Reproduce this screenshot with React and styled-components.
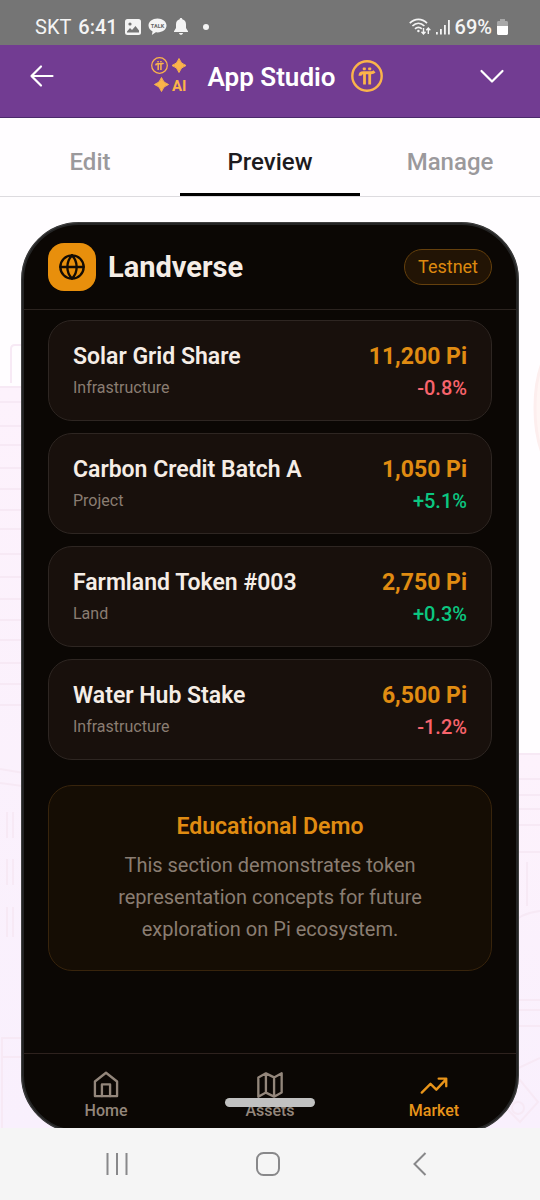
import React, { useState } from "react";
import styled, { createGlobalStyle } from "styled-components";

const GlobalStyle = createGlobalStyle`
  * {
    box-sizing: border-box;
  }

  body {
    margin: 0;
    background: #fffdff;
    font-family: Roboto, "Noto Sans", sans-serif;
  }

  button {
    margin: 0;
    padding: 0;
    border: 0;
    background: none;
    font-family: inherit;
    color: inherit;
    cursor: pointer;
  }

  h1, h2, h3, p, ul {
    margin: 0;
    padding: 0;
  }

  svg {
    display: block;
    flex: none;
  }
`;

const Page = styled.div`
  min-height: 100vh;
  display: flex;
  flex-direction: column;
`;

const StatusBar = styled.div`
  height: 45px;
  padding: 8px 32px 0 35px;
  display: flex;
  justify-content: space-between;
  background: #757575;
  color: #f4f4f4;
  font-size: 20px;
`;

const StatusGroup = styled.div`
  display: flex;
  align-items: center;
  gap: ${(props) => props.$gap};
`;

const StatusText = styled.span`
  font-weight: ${(props) => (props.$strong ? 500 : 400)};
`;

const Dot = styled.span`
  width: 6px;
  height: 6px;
  margin-left: 8px;
  border-radius: 50%;
  background: currentColor;
`;

const TopBar = styled.header`
  height: 73px;
  padding: 0 35px 11px 29px;
  display: flex;
  align-items: center;
  justify-content: space-between;
  background: #723c92;
  border-bottom: 1px solid #4b2a6b;
  color: white;
`;

const Brand = styled.div`
  display: flex;
  align-items: center;
  gap: 16px;
  color: #fbb44a;
`;

const BrandTitle = styled.h1`
  padding: 3px 0 0 4px;
  color: white;
  font-size: 26px;
  line-height: 32px;
  font-weight: 600;
`;

const Tabs = styled.nav`
  height: 79px;
  display: flex;
  border-bottom: 1px solid #dddbdf;
`;

const Tab = styled.button`
  flex: 1;
  padding-top: 12px;
  border-bottom: 3px solid ${(props) => (props.$active ? "#000" : "transparent")};
  color: ${(props) => (props.$active ? "#1d1b20" : "#9b999c")};
  font-size: 24px;
  font-weight: 500;
`;

const Stage = styled.main`
  position: relative;
  flex: 1;
  display: flex;
  padding: 25px 21px 0;
  overflow: hidden;
`;

const Backdrop = styled.svg`
  position: absolute;
  inset: 0;
  width: 100%;
  height: 100%;
`;

const Device = styled.section`
  position: relative;
  flex: 1;
  margin-bottom: -5px;
  display: flex;
  flex-direction: column;
  border: 3px solid #242424;
  border-radius: 58px;
  outline: 1px solid rgba(90, 90, 90, 0.5);
  outline-offset: -1px;
  background: #0b0704;
  overflow: hidden;
`;

const AppHeader = styled.div`
  padding: 18px 24px;
  display: flex;
  align-items: center;
  gap: 12px;
  border-bottom: 1px solid #2b231f;
`;

const AppLogo = styled.div`
  width: 48px;
  height: 48px;
  display: grid;
  place-items: center;
  border-radius: 16px;
  background: #e88f0c;
  color: #140c04;
`;

const AppName = styled.h2`
  flex: 1;
  color: #f5ede6;
  font-size: 29px;
  line-height: 36px;
  font-weight: 700;
`;

const Badge = styled.span`
  padding: 5px 13px;
  border: 1px solid #65400d;
  border-radius: 18px;
  background: #221405;
  color: #dd890f;
  font-size: 18px;
  line-height: 24px;
`;

const Content = styled.div`
  flex: 1;
  padding: 10px 24px 24px;
`;

const AssetList = styled.ul`
  display: flex;
  flex-direction: column;
  gap: 12px;
  list-style: none;
`;

const AssetCard = styled.li`
  padding: 20px 24px 17px;
  display: flex;
  justify-content: space-between;
  border: 1px solid #2e2622;
  border-radius: 24px;
  background: #18100c;
`;

const AssetColumn = styled.div`
  text-align: ${(props) => props.$align || "left"};
`;

const AssetName = styled.h3`
  color: #f5ede6;
  font-size: 23px;
  line-height: 32px;
  font-weight: 600;
`;

const AssetType = styled.p`
  color: #8a7d72;
  font-size: 16px;
  line-height: 30px;
`;

const AssetPrice = styled.p`
  color: #e08c12;
  font-size: 23px;
  line-height: 32px;
  font-weight: 700;
`;

const AssetChange = styled.p`
  color: ${(props) => (props.$down ? "#f8646c" : "#0bc781")};
  font-size: 20px;
  line-height: 30px;
  font-weight: 500;
`;

const Notice = styled.section`
  margin-top: 25px;
  padding: 25px 48px;
  border: 1px solid #38240c;
  border-radius: 24px;
  background: #150d04;
  text-align: center;
`;

const NoticeTitle = styled.h3`
  color: #e08c12;
  font-size: 23px;
  line-height: 32px;
  font-weight: 600;
`;

const NoticeText = styled.p`
  margin-top: 6px;
  color: #8a7d72;
  font-size: 20px;
  line-height: 32px;
`;

const AppNav = styled.nav`
  height: 77px;
  display: grid;
  grid-template-columns: repeat(3, 1fr);
  border-top: 1px solid #2e221e;
`;

const AppNavItem = styled.button`
  padding-top: 17px;
  display: flex;
  flex-direction: column;
  align-items: center;
  gap: 1px;
  color: ${(props) => (props.$active ? "#e8941a" : "#93867b")};
  font-size: 16px;
  line-height: 22px;
  font-weight: 500;
`;

const GestureHandle = styled.div`
  position: absolute;
  left: 50%;
  bottom: 21px;
  width: 90px;
  height: 9px;
  border-radius: 5px;
  background: #c1c1c1;
  transform: translateX(-50%);
`;

const SystemNav = styled.footer`
  height: 72px;
  padding: 0 44px 0 41px;
  display: grid;
  grid-template-columns: repeat(3, 1fr);
  background: #f5f5f5;
  color: #88888a;
`;

const SystemButton = styled.button`
  display: grid;
  place-items: center;
`;

const assets = [
  { name: "Solar Grid Share", type: "Infrastructure", price: "11,200 Pi", change: "-0.8%" },
  { name: "Carbon Credit Batch A", type: "Project", price: "1,050 Pi", change: "+5.1%" },
  { name: "Farmland Token #003", type: "Land", price: "2,750 Pi", change: "+0.3%" },
  { name: "Water Hub Stake", type: "Infrastructure", price: "6,500 Pi", change: "-1.2%" },
];

const Stroke = ({ size = 28, width = 2, children }) => (
  <svg
    width={size}
    height={size}
    viewBox="0 0 24 24"
    fill="none"
    stroke="currentColor"
    strokeWidth={width}
    strokeLinecap="round"
    strokeLinejoin="round"
    aria-hidden="true"
  >
    {children}
  </svg>
);

const PhotoIcon = () => (
  <svg width="16" height="16" viewBox="0 0 16 16" aria-hidden="true">
    <rect width="16" height="16" rx="2.5" fill="currentColor" />
    <circle cx="5" cy="5" r="1.6" fill="#757575" />
    <path d="M2 12.5l3-3.5 2 2 3.5-4 3.5 4.5V13.500H2z" fill="#757575" />
  </svg>
);

const TalkIcon = () => (
  <svg width="19" height="18" viewBox="0 0 19 18" aria-hidden="true">
    <path
      d="M9.500 0.500C4.500 0.500 0.500 3.500 0.500 7.500c0 2.600 1.600 4.700 4.100 5.900L3.800 17l4-2.700c.6.1 1.100.1 1.700.1 5 0 9-3 9-6.900s-4-7-9-7z"
      fill="currentColor"
    />
    <text x="9.500" y="9.500" textAnchor="middle" fontSize="5.500" fontWeight="700" fill="#666">
      TALK
    </text>
  </svg>
);

const BellIcon = () => (
  <svg width="14" height="17" viewBox="0 0 14 17" fill="currentColor" aria-hidden="true">
    <path d="M7 0c.8 0 1.300.5 1.300 1.300C10.700 1.900 12 3.800 12 6.300V10l2 3.200v.8H0v-.8L2 10V6.300c0-2.500 1.300-4.400 3.700-5C5.700.5 6.200 0 7 0z" />
    <path d="M5 15h4c-.2 1.100-1 1.800-2 1.800S5.200 16.100 5 15z" />
  </svg>
);

const WifiIcon = () => (
  <svg width="22" height="18" viewBox="0 0 22 18" fill="none" stroke="currentColor" strokeWidth="1.700" aria-hidden="true">
    <path d="M0.800 5.200C5.800 0.200 13 0.200 18 5.200" />
    <path d="M3.400 8C7 4.500 11.800 4.500 15.400 8" />
    <path d="M6 10.800c2-2 4.800-2 6.800 0" />
    <circle cx="9.400" cy="13" r="1.200" fill="currentColor" stroke="none" />
    <path d="M14.500 10v5.500M12.500 13.800l2 2.200 2-2.200M19.300 16v-5.500M17.300 12.200l2-2.200 2 2.200" strokeWidth="1.400" />
  </svg>
);

const SignalIcon = () => (
  <svg width="14" height="16" viewBox="0 0 14 16" fill="currentColor" aria-hidden="true">
    <rect x="0" y="13" width="1.800" height="2.500" />
    <rect x="4" y="10" width="1.800" height="5.500" />
    <rect x="8" y="6" width="1.800" height="9.500" />
    <rect x="12" y="1" width="1.800" height="14.500" />
  </svg>
);

const BatteryIcon = () => (
  <svg width="11" height="16" viewBox="0 0 11 16" aria-hidden="true">
    <path d="M3 0h5v2h1.500c.9 0 1.500.6 1.500 1.500V7H0V3.500C0 2.600.6 2 1.500 2H3z" fill="#a8a8a8" />
    <path d="M0 7h11v7.500c0 .9-.6 1.500-1.500 1.500h-8C.6 16 0 15.400 0 14.500z" fill="#fff" />
  </svg>
);

const PiMark = () => (
  <>
    <circle cx="16" cy="16" r="14.700" fill="none" stroke="currentColor" strokeWidth="2.400" />
    <rect x="11.800" y="7.600" width="3" height="2.600" rx="0.600" fill="currentColor" />
    <rect x="17.200" y="7.600" width="3" height="2.600" rx="0.600" fill="currentColor" />
    <path
      d="M9 15.700c.1-2 1.300-3 3.200-3h8c1.500 0 2.400-.4 3.300-1.300"
      fill="none"
      stroke="currentColor"
      strokeWidth="3"
    />
    <path d="M13.500 12.500v12M18.700 12.500v12" fill="none" stroke="currentColor" strokeWidth="2.800" />
  </>
);

const PiCoin = () => (
  <svg width="32" height="32" viewBox="0 0 32 32" aria-hidden="true">
    <PiMark />
  </svg>
);

const StudioLogo = () => (
  <svg width="37" height="38" viewBox="0 0 37 38" fill="currentColor" aria-hidden="true">
    <svg width="17" height="17" viewBox="0 0 32 32">
      <PiMark />
    </svg>
    <path d="M28 1.500q1.500 5.500 7 7-5.500 1.500-7 7-1.500-5.500-7-7 5.500-1.500 7-7z" stroke="currentColor" strokeLinejoin="round" />
    <path d="M10.500 20.500q1.500 5.500 7 7-5.500 1.500-7 7-1.500-5.500-7-7 5.500-1.500 7-7z" stroke="currentColor" strokeLinejoin="round" />
    <text x="21" y="34" fontSize="15" fontWeight="700">
      AI
    </text>
  </svg>
);

const SceneBackdrop = () => (
  <Backdrop viewBox="0 0 540 931" preserveAspectRatio="xMidYMid slice" aria-hidden="true">
    <defs>
      <linearGradient id="haze" x1="0" y1="0" x2="0" y2="1">
        <stop offset="0" stopColor="#fdf2fc" />
        <stop offset="1" stopColor="#f9f0fd" />
      </linearGradient>
    </defs>
    <rect x="0" y="190" width="270" height="741" fill="url(#haze)" />
    <rect x="270" y="557" width="270" height="374" fill="url(#haze)" />
    <g fill="none" stroke="#f7e9f5" strokeWidth="2">
      <path d="M11 186v-34q0-4 4-4h15" />
      <path d="M0 190h30M0 205h30M0 229h30M0 248h30M0 271h30M0 292h30M0 313h30M0 332h30M0 357h30M0 380h30M0 402h30M0 423h30M0 443h30M0 466h30M0 487h30M0 508h30" />
      <path d="M0 572l30 5M0 586l30 4" />
      <path d="M7 615v26M13 615v26M7 662v26M13 662v26M7 710v30M13 710v30" />
      <path d="M2 931v-90h28M2 860h28" />
      <path d="M510 557h30M510 582h30M510 598h30M510 612h30M510 628h30M510 655h30" />
      <path d="M527 665v44M510 729q10-13 30-15M510 803h30M510 813h30M510 829h30M510 875l30-14" />
      <path d="M500 905l20-22 18 22-18 20z" />
      <circle cx="518" cy="911" r="6" />
    </g>
    <ellipse cx="565" cy="211" rx="30" ry="70" fill="#fff5f4" stroke="#fdeeee" strokeWidth="3" />
  </Backdrop>
);

const tabNames = ["Edit", "Preview", "Manage"];

const HomeIcon = () => (
  <Stroke>
    <path d="M2.500 9 12 1.500 21.500 9V21.500h-19z" />
    <path d="M8.500 21.500V11.500h7v10" />
  </Stroke>
);

const MapIcon = () => (
  <Stroke>
    <path d="M2 5.500 8.500 2l7 3.500L22 2v16.500L15.500 22l-7-3.500L2 22zM8.500 2v16.500M15.500 5.500V22" />
  </Stroke>
);

const TrendIcon = () => (
  <Stroke>
    <path d="M1.500 18.500 9 11l5 5 8.500-9M16 6.500h6.500V13" />
  </Stroke>
);

const sections = [
  { label: "Home", Icon: HomeIcon },
  { label: "Assets", Icon: MapIcon },
  { label: "Market", Icon: TrendIcon },
];

const App = () => {
  const [activeTab, setActiveTab] = useState("Preview");
  const [activeSection, setActiveSection] = useState("Market");

  const tabList = tabNames.map((tab) => (
    <Tab key={tab} $active={tab === activeTab} onClick={() => setActiveTab(tab)}>
      {tab}
    </Tab>
  ));

  const assetList = assets.map((asset) => (
    <AssetCard key={asset.name}>
      <AssetColumn>
        <AssetName>{asset.name}</AssetName>
        <AssetType>{asset.type}</AssetType>
      </AssetColumn>
      <AssetColumn $align="right">
        <AssetPrice>{asset.price}</AssetPrice>
        <AssetChange $down={asset.change.startsWith("-")}>{asset.change}</AssetChange>
      </AssetColumn>
    </AssetCard>
  ));

  const sectionList = sections.map(({ label, Icon }) => (
    <AppNavItem key={label} $active={label === activeSection} onClick={() => setActiveSection(label)}>
      <Icon />
      {label}
    </AppNavItem>
  ));

  return (
    <Page>
      <GlobalStyle />
      <StatusBar>
        <StatusGroup $gap="7px">
          <StatusText>SKT</StatusText>
          <StatusText $strong>6:41</StatusText>
          <PhotoIcon />
          <TalkIcon />
          <BellIcon />
          <Dot />
        </StatusGroup>
        <StatusGroup $gap="5px">
          <WifiIcon />
          <SignalIcon />
          <StatusText $strong>69%</StatusText>
          <BatteryIcon />
        </StatusGroup>
      </StatusBar>

      <TopBar>
        <button aria-label="Back">
          <svg width="26" height="24" viewBox="0 0 26 24" fill="none" stroke="currentColor" strokeWidth="2.200" strokeLinecap="round" strokeLinejoin="round">
            <path d="M23.500 12H2.500M12 2.500 2.500 12l9.500 9.500" />
          </svg>
        </button>
        <Brand>
          <StudioLogo />
          <BrandTitle>App Studio</BrandTitle>
          <PiCoin />
        </Brand>
        <button aria-label="Expand">
          <svg width="26" height="24" viewBox="0 0 26 24" fill="none" stroke="currentColor" strokeWidth="2.200" strokeLinecap="round" strokeLinejoin="round">
            <path d="M2.500 7 13 17.500 23.500 7" />
          </svg>
        </button>
      </TopBar>

      <Tabs>{tabList}</Tabs>

      <Stage>
        <SceneBackdrop />
        <Device>
          <AppHeader>
            <AppLogo>
              <Stroke>
                <circle cx="12" cy="12" r="10" />
                <path d="M12 2a14.500 14.500 0 0 0 0 20 14.500 14.500 0 0 0 0-20M2 12h20" />
              </Stroke>
            </AppLogo>
            <AppName>Landverse</AppName>
            <Badge>Testnet</Badge>
          </AppHeader>
          <Content>
            <AssetList>{assetList}</AssetList>
            <Notice>
              <NoticeTitle>Educational Demo</NoticeTitle>
              <NoticeText>
                This section demonstrates token representation concepts for future exploration on Pi ecosystem.
              </NoticeText>
            </Notice>
          </Content>
          <AppNav>{sectionList}</AppNav>
        </Device>
        <GestureHandle />
      </Stage>

      <SystemNav>
        <SystemButton aria-label="Recent apps">
          <svg width="24" height="24" viewBox="0 0 24 24" fill="none" stroke="currentColor" strokeWidth="2">
            <path d="M2.500 1v22M12 1v22M21.500 1v22" />
          </svg>
        </SystemButton>
        <SystemButton aria-label="Home screen">
          <svg width="24" height="24" viewBox="0 0 24 24" fill="none" stroke="currentColor" strokeWidth="2">
            <rect x="1" y="1" width="22" height="22" rx="6.500" />
          </svg>
        </SystemButton>
        <SystemButton aria-label="Previous screen">
          <svg width="24" height="24" viewBox="0 0 24 24" fill="none" stroke="currentColor" strokeWidth="2">
            <path d="M17.500 1 6.500 12l11 11" />
          </svg>
        </SystemButton>
      </SystemNav>
    </Page>
  );
};

export default App;
